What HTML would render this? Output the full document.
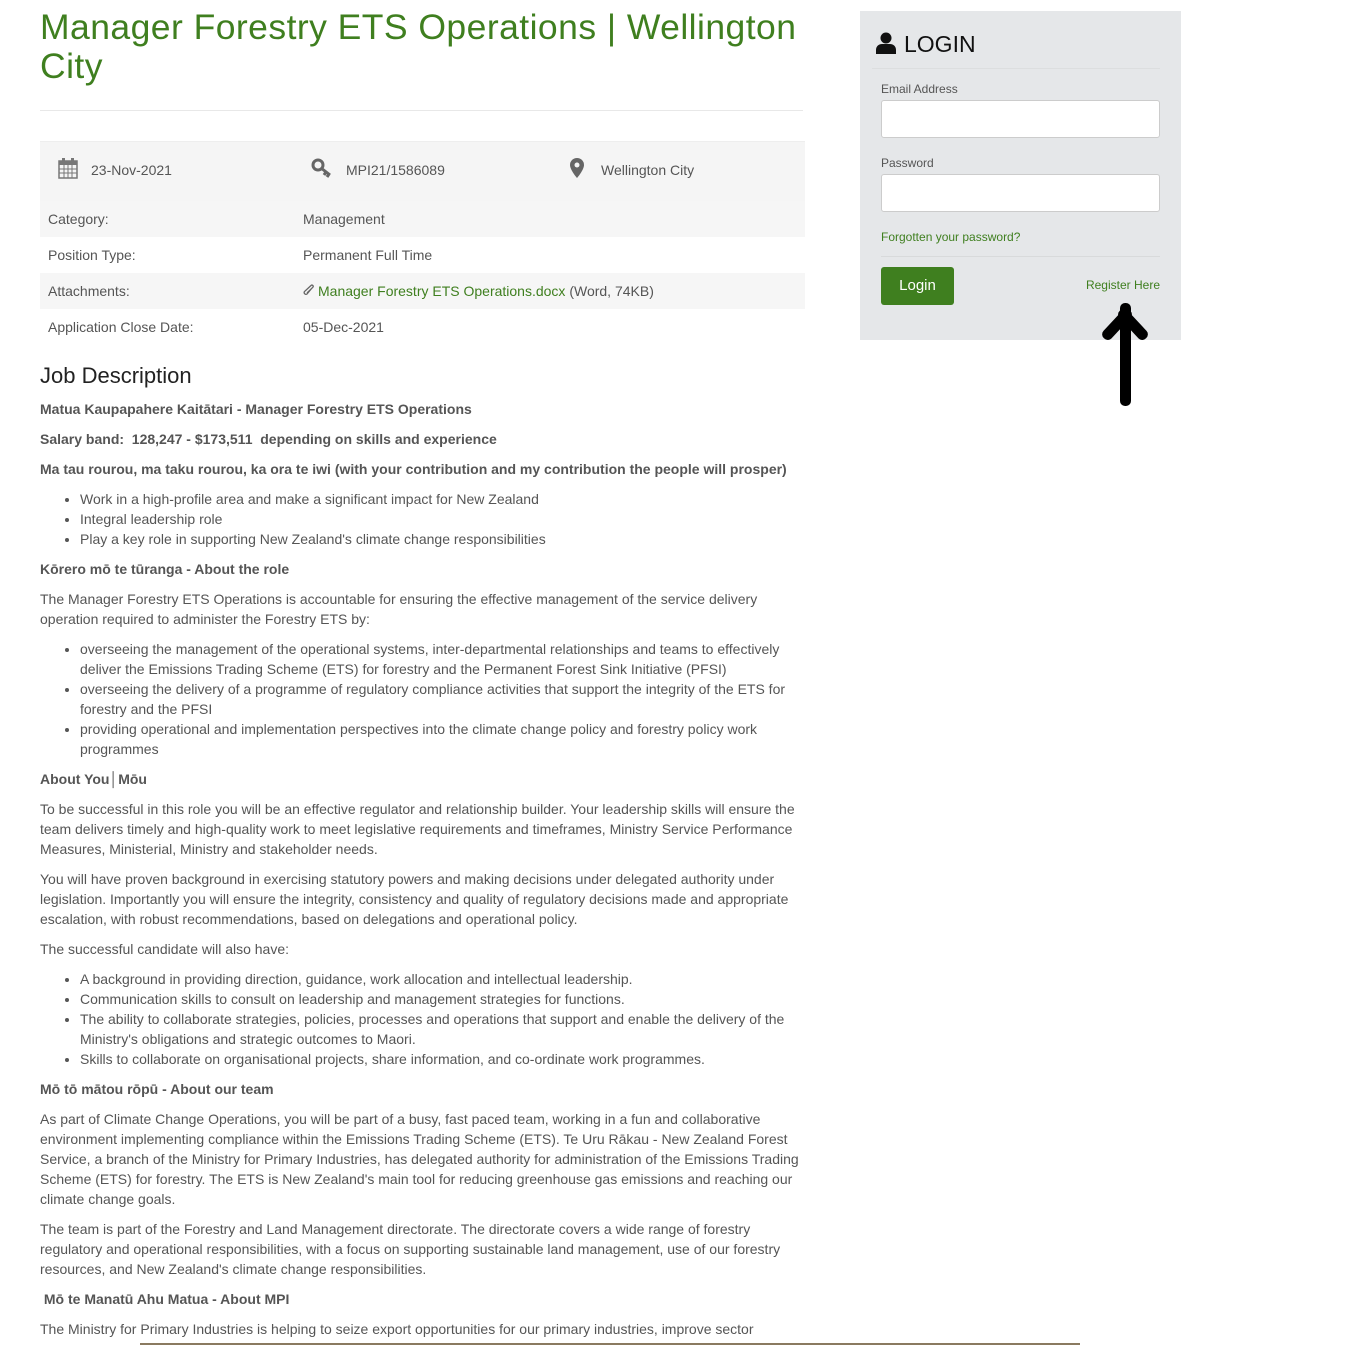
<!DOCTYPE html>
<html><head><meta charset="utf-8"><style>
body{margin:0;background:#fff;font-family:"Liberation Sans",sans-serif;color:#555;font-size:14px;width:1363px;height:1345px;overflow:hidden;position:relative}
h1{position:absolute;left:40px;top:8px;margin:0;font-weight:normal;color:#3f7f1f;font-size:35.5px;line-height:39px;width:780px;letter-spacing:0.45px}
.hr{position:absolute;left:40px;width:763px;height:1px;background:#e8e8e8;top:110px}
.meta{position:absolute;left:40px;top:141px;width:765px;height:59px;background:#f5f5f5;border-top:1px solid #eee}
.meta span{position:absolute;top:20px;font-size:14px}
.row{position:absolute;left:40px;width:765px;height:36px;line-height:36px}
.row.g{background:#f6f6f6}
.row .a{position:absolute;left:8px}.row .b{position:absolute;left:263px}
a{color:#3f7f1f;text-decoration:none}
h2{position:absolute;left:40px;top:363px;margin:0;font-weight:normal;font-size:22px;color:#222}
.c{position:absolute;left:40px;top:399px;width:765px;line-height:20px;font-size:14px}
.c p{margin:0 0 10px}
.c b{color:#555}
.c ul{margin:0 0 10px;padding-left:40px}
.login{position:absolute;left:860px;top:11px;width:321px;height:329px;background:#e5e7e9}
.login label{position:absolute;left:21px;font-size:12px;color:#555}
.inp{position:absolute;left:21px;width:277px;height:36px;background:#fff;border:1px solid #ccc;border-radius:3px}
</style></head><body>
<h1>Manager Forestry ETS Operations | Wellington City</h1>
<div class="hr"></div>
<div class="meta">
<svg style="position:absolute;left:18px;top:15px" width="20" height="22" viewBox="0 0 20 22"><rect x="1" y="4" width="18" height="17" fill="none" stroke="#777" stroke-width="1.5"/><rect x="1" y="4" width="18" height="4" fill="#777"/><rect x="4" y="1" width="3" height="5" fill="#777"/><rect x="13" y="1" width="3" height="5" fill="#777"/><path d="M1 12h18M1 16h18M6 8v13M10 8v13M14 8v13" stroke="#777"/></svg>
<span style="left:51px">23-Nov-2021</span>
<svg style="position:absolute;left:271px;top:16px" width="22" height="20" viewBox="0 0 22 20"><circle cx="7" cy="7" r="5" fill="none" stroke="#666" stroke-width="3"/><path d="M10 10l9 7M15 14l-2 3M18 16l-2 3" stroke="#666" stroke-width="3"/></svg>
<span style="left:306px">MPI21/1586089</span>
<svg style="position:absolute;left:530px;top:16px" width="14" height="20" viewBox="0 0 14 20"><path d="M7 0a7 7 0 0 1 7 7c0 5-7 13-7 13S0 12 0 7a7 7 0 0 1 7-7z" fill="#666"/><circle cx="7" cy="7" r="2.5" fill="#f5f5f5"/></svg>
<span style="left:561px">Wellington City</span>
</div>
<div class="row g" style="top:201px"><span class="a">Category:</span><span class="b">Management</span></div>
<div class="row" style="top:237px"><span class="a">Position Type:</span><span class="b">Permanent Full Time</span></div>
<div class="row g" style="top:273px"><span class="a">Attachments:</span><span class="b"><svg width="12" height="13" viewBox="0 0 12 13" style="vertical-align:-1px;margin-right:3px"><path d="M9 4L4 10a1.8 1.8 0 0 1-2.5-2.5L8 1.5a1.2 1.2 0 0 1 1.8 1.8L4 9" fill="none" stroke="#666" stroke-width="1.3"/></svg><a href="#">Manager Forestry ETS Operations.docx</a> (Word, 74KB)</span></div>
<div class="row" style="top:309px"><span class="a">Application Close Date:</span><span class="b">05-Dec-2021</span></div>
<h2>Job Description</h2>
<div class="c">
<p><b>Matua Kaupapahere Kaitātari - Manager Forestry ETS Operations</b></p>
<p><b>Salary band:&nbsp; 128,247 - $173,511&nbsp; depending on skills and experience</b></p>
<p><b>Ma tau rourou, ma taku rourou, ka ora te iwi (with your contribution and my contribution the people will prosper)</b></p>
<ul><li>Work in a high-profile area and make a significant impact for New Zealand</li><li>Integral leadership role</li><li>Play a key role in supporting New Zealand's climate change responsibilities</li></ul>
<p><b>Kōrero mō te tūranga - About the role</b></p>
<p>The Manager Forestry ETS Operations is accountable for ensuring the effective management of the service delivery operation required to administer the Forestry ETS by:</p>
<ul><li>overseeing the management of the operational systems, inter-departmental relationships and teams to effectively deliver the Emissions Trading Scheme (ETS) for forestry and the Permanent Forest Sink Initiative (PFSI)</li><li>overseeing the delivery of a programme of regulatory compliance activities that support the integrity of the ETS for forestry and the PFSI</li><li>providing operational and implementation perspectives into the climate change policy and forestry policy work programmes</li></ul>
<p><b>About You│Mōu</b></p>
<p>To be successful in this role you will be an effective regulator and relationship builder. Your leadership skills will ensure the team delivers timely and high-quality work to meet legislative requirements and timeframes, Ministry Service Performance Measures, Ministerial, Ministry and stakeholder needs.</p>
<p>You will have proven background in exercising statutory powers and making decisions under delegated authority under legislation. Importantly you will ensure the integrity, consistency and quality of regulatory decisions made and appropriate escalation, with robust recommendations, based on delegations and operational policy.</p>
<p>The successful candidate will also have:</p>
<ul><li>A background in providing direction, guidance, work allocation and intellectual leadership.</li><li>Communication skills to consult on leadership and management strategies for functions.</li><li>The ability to collaborate strategies, policies, processes and operations that support and enable the delivery of the Ministry's obligations and strategic outcomes to Maori.</li><li>Skills to collaborate on organisational projects, share information, and co-ordinate work programmes.</li></ul>
<p><b>Mō tō mātou rōpū - About our team</b></p>
<p>As part of Climate Change Operations, you will be part of a busy, fast paced team, working in a fun and collaborative environment implementing compliance within the Emissions Trading Scheme (ETS). Te Uru Rākau - New Zealand Forest Service, a branch of the Ministry for Primary Industries, has delegated authority for administration of the Emissions Trading Scheme (ETS) for forestry. The ETS is New Zealand's main tool for reducing greenhouse gas emissions and reaching our climate change goals.</p>
<p>The team is part of the Forestry and Land Management directorate. The directorate covers a wide range of forestry regulatory and operational responsibilities, with a focus on supporting sustainable land management, use of our forestry resources, and New Zealand's climate change responsibilities.</p>
<p><b>&nbsp;Mō te Manatū Ahu Matua - About MPI</b></p>
<p>The Ministry for Primary Industries is helping to seize export opportunities for our primary industries, improve sector</p>
</div>
<div style="position:absolute;left:140px;top:1343px;width:940px;height:2px;background:#8a7a60"></div>
<div class="login">
<svg style="position:absolute;left:16px;top:21px" width="20" height="22" viewBox="0 0 20 22"><circle cx="10" cy="6" r="5.5" fill="#111"/><path d="M0 22v-4c0-4 3-6 6-6h8c3 0 6 2 6 6v4z" fill="#111"/></svg>
<div style="position:absolute;left:44px;top:20px;font-size:23px;color:#111">LOGIN</div>
<div style="position:absolute;left:12px;top:57px;width:288px;height:1px;background:#dcdedf"></div>
<label style="top:71px">Email Address</label>
<div class="inp" style="top:89px"></div>
<label style="top:145px">Password</label>
<div class="inp" style="top:163px"></div>
<div style="position:absolute;left:21px;top:219px;font-size:12px;color:#3f7f1f">Forgotten your password?</div>
<div style="position:absolute;left:21px;top:245px;width:279px;height:1px;background:#d8dadb"></div>
<div style="position:absolute;left:21px;top:256px;width:73px;height:38px;background:#3f7f1f;border-radius:3px;color:#fff;font-size:15px;line-height:38px;text-align:center">Login</div>
<div style="position:absolute;right:21px;top:267px;font-size:12px;color:#3f7f1f">Register Here</div>
</div>
<div style="position:absolute;left:1120px;top:303px;width:11px;height:103px;background:#000;border-radius:5px"></div>
<div style="position:absolute;top:305px;width:38px;height:11px;background:#000;border-radius:5px;transform:rotate(-47deg);transform-origin:right center;left:1092px"></div>
<div style="position:absolute;top:305px;width:38px;height:11px;background:#000;border-radius:5px;transform:rotate(47deg);transform-origin:left center;left:1120px"></div>
</body></html>
